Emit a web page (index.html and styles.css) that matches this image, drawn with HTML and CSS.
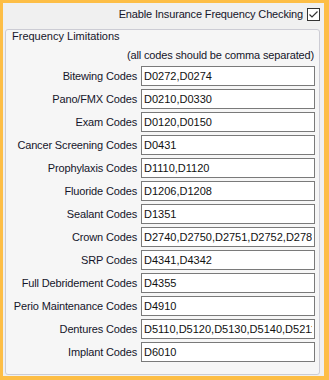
FILE: index.html
```html
<!DOCTYPE html>
<html lang="en">
<head>
  <meta charset="UTF-8">
  <meta name="viewport" content="width=device-width,initial-scale=1.0">
  <title>Frequency Limitations</title>
  <link rel="stylesheet" href="styles.css">
</head>
<body>
  <div class="panel">
    <label class="enable-row">
      <span>Enable Insurance Frequency Checking</span>
      <span class="check">
        <svg width="11" height="11" viewBox="0 0 11 11">
          <path d="M1.5 5.5 L4 8 L9.5 2.5" fill="none" stroke="#333" stroke-width="1.2"/>
        </svg>
      </span>
    </label>

    <section class="group">
      <div class="group-title">Frequency Limitations</div>
      <div class="hint">(all codes should be comma separated)</div>

      <div class="rows">
        <div class="row"><label>Bitewing Codes</label><input type="text" value="D0272,D0274"></div>
        <div class="row"><label>Pano/FMX Codes</label><input type="text" value="D0210,D0330"></div>
        <div class="row"><label>Exam Codes</label><input type="text" value="D0120,D0150"></div>
        <div class="row"><label>Cancer Screening Codes</label><input type="text" value="D0431"></div>
        <div class="row"><label>Prophylaxis Codes</label><input type="text" value="D1110,D1120"></div>
        <div class="row"><label>Fluoride Codes</label><input type="text" value="D1206,D1208"></div>
        <div class="row"><label>Sealant Codes</label><input type="text" value="D1351"></div>
        <div class="row"><label>Crown Codes</label><input type="text" value="D2740,D2750,D2751,D2752,D2780"></div>
        <div class="row"><label>SRP Codes</label><input type="text" value="D4341,D4342"></div>
        <div class="row"><label>Full Debridement Codes</label><input type="text" value="D4355"></div>
        <div class="row"><label>Perio Maintenance Codes</label><input type="text" value="D4910"></div>
        <div class="row"><label>Dentures Codes</label><input type="text" value="D5110,D5120,D5130,D5140,D5211"></div>
        <div class="row"><label>Implant Codes</label><input type="text" value="D6010"></div>
      </div>
    </section>
  </div>
</body>
</html>
```

FILE: styles.css
```css
:root {
  --frame: #fdbe46;
  --bg: #f0f0f0;
  --group-bg: #f6f6f6;
  --text: #15152a;
  --box-border: #7a7a7a;
}
*, *::before, *::after { box-sizing: border-box; }
body {
  margin: 0;
  width: 329px;
  height: 380px;
  padding: 3px 5px 4px 3px;
  background: var(--frame);
  font-family: 'Liberation Sans', Arial, sans-serif;
  font-size: 11px;
  color: var(--text);
}
.panel {
  height: 373px;
  background: var(--bg);
  padding: 5px 4px 1px 2px;
}

.enable-row {
  display: flex;
  justify-content: flex-end;
  align-items: center;
  gap: 4px;
  height: 13px;
  line-height: 13px;
  letter-spacing: -0.15px;
}
.check {
  width: 13px;
  height: 13px;
  border: 1px solid #333;
  background: #fff;
  display: flex;
  align-items: center;
  justify-content: center;
}

.group {
  margin-top: 8px;
  height: 346px;
  border: 1px solid #ccccd4;
  border-radius: 3px;
  background: var(--group-bg);
}
.group-title {
  line-height: 13px;
  padding-left: 6px;
}
.hint {
  margin-top: 6px;
  line-height: 13px;
  text-align: right;
  padding-right: 5px;
  letter-spacing: -0.15px;
}

.rows {
  margin-top: 4px;
  margin-right: 4px;
  display: flex;
  flex-direction: column;
  gap: 3px;
}
.row {
  display: grid;
  grid-template-columns: 1fr 174px;
  column-gap: 4px;
  height: 20px;
}
.row label {
  text-align: right;
  line-height: 20px;
  white-space: nowrap;
  letter-spacing: -0.15px;
}
.row input {
  height: 20px;
  width: 174px;
  margin: 0;
  padding: 0 2px;
  border: 1px solid var(--box-border);
  border-radius: 0;
  background: #fff;
  font: inherit;
  color: #111;
}
```
